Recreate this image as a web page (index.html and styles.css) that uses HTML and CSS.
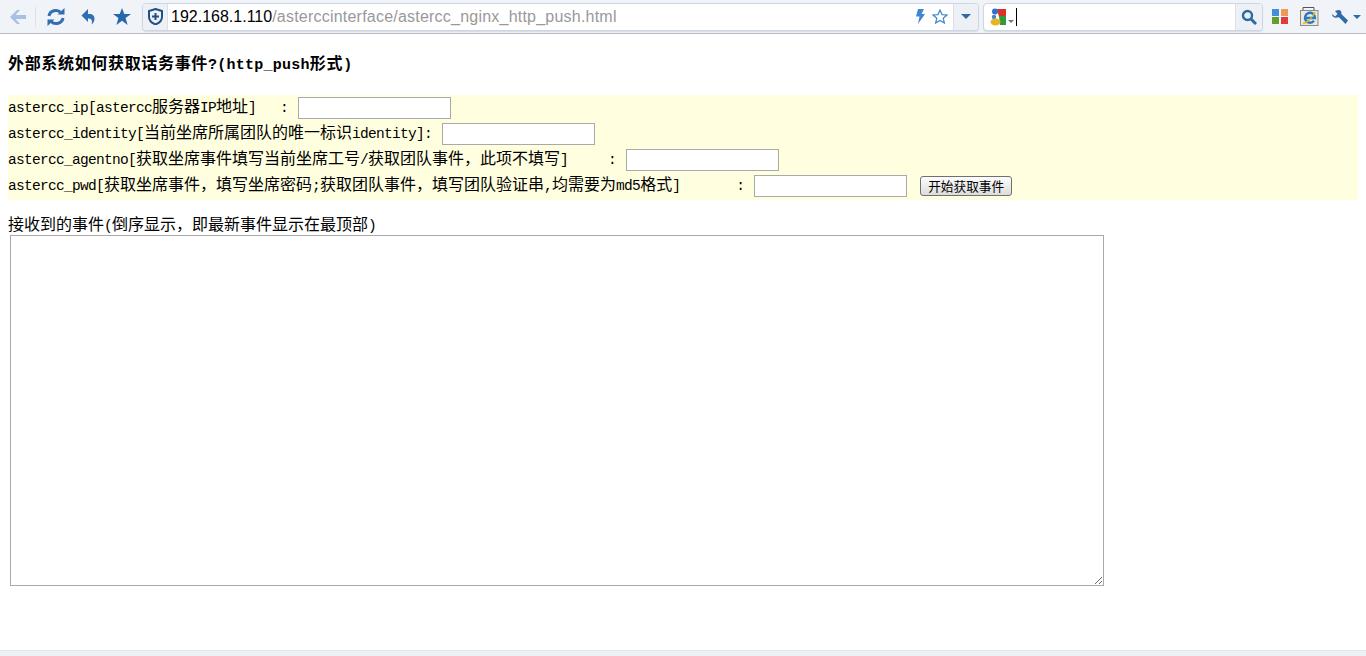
FILE: index.html
```html
<!DOCTYPE html>
<html lang="zh-CN">
<head>
<meta charset="utf-8">
<title>astercc_nginx_http_push</title>
<link rel="stylesheet" href="styles.css">
</head>
<body>
<header class="toolbar">
  <button class="tool tool-back" aria-label="back">
    <svg width="18" height="16" viewBox="0 0 18 16"><path d="M8 1 1 8l7 7h3L6.500 10H17V6H6.500L11 1z" fill="#a9c1e0"/></svg>
  </button>
  <span class="tool-sep"></span>
  <button class="tool tool-reload" aria-label="reload">
    <svg width="20" height="18" viewBox="0 0 20 18"><path d="M3 8a7 6.500 0 0 1 12-3.500M17 10a7 6.500 0 0 1-12 3.500" fill="none" stroke="#2f6fb2" stroke-width="3"/><path d="M11.500 6.500h7V0zM8.500 11.500h-7V18z" fill="#2f6fb2"/></svg>
  </button>
  <button class="tool tool-undo" aria-label="undo">
    <svg width="16" height="16" viewBox="0 0 16 16"><path d="M7 5h2a4.500 4.500 0 0 1 4.500 4.500c0 2.500-1 4.500-3 6 .7-2 .7-4-.3-5-.6-.7-1.500-1-3.200-1v3.500L.5 6.500 7 0z" fill="#2f6fb2"/></svg>
  </button>
  <button class="tool tool-star" aria-label="favorites">
    <svg width="18" height="17" viewBox="0 0 18 17"><path d="m9 0 2.300 6H18l-5.400 4 2 7L9 12.800 3.400 17l2-7L0 6h6.700z" fill="#2768ad"/></svg>
  </button>
  <div class="address">
    <span class="addr-shield">
      <svg width="15" height="17" viewBox="0 0 15 17"><path d="M7.500 1 14 3v6c0 3.500-3 6-6.500 7.500C4 15 1 12.500 1 9V3z" fill="none" stroke="#1f4f86" stroke-width="2"/><path d="M6.500 5h2v2.500H11v2H8.500V12h-2V9.500H4v-2h2.500z" fill="#1f4f86"/></svg>
    </span>
    <span class="addr-url"><span class="url-host">192.168.1.110</span><span class="url-path">/asterccinterface/astercc_nginx_http_push.html</span></span>
    <svg class="addr-bolt" width="10" height="15" viewBox="0 0 10 15"><path d="M3 0h6L6.500 5H10L3 15l1.500-7.500H1z" fill="#3f86d0"/></svg>
    <svg class="addr-fav" width="16" height="15" viewBox="0 0 16 15"><path d="m8 1 2 4.600 5 .4-3.800 3.200L12.400 14 8 11.400 3.600 14l1.200-4.800L1 6l5-.4z" fill="#fff" stroke="#3f86d0" stroke-width="1.200"/></svg>
    <span class="addr-drop"><span class="tri tri-blue"></span></span>
  </div>
  <div class="search">
    <svg class="search-logo" width="17" height="18" viewBox="0 0 17 18"><path d="M7 1h9v8H9z" fill="#d8322a"/><path d="M9 8h7v9h-6z" fill="#2f9b3c"/><circle cx="5" cy="3.500" r="3" fill="#2f6fce"/><circle cx="4" cy="9" r="2.200" fill="#3f86d0"/><ellipse cx="5.500" cy="14" rx="5" ry="3.500" fill="#e5b523"/></svg>
    <span class="tri tri-grey"></span>
    <span class="search-caret"></span>
    <span class="search-btn">
      <svg width="16" height="16" viewBox="0 0 16 16"><circle cx="6.500" cy="6.500" r="4.500" fill="none" stroke="#2a6aa8" stroke-width="2.400"/><path d="m10 10 5 5" stroke="#2a6aa8" stroke-width="3"/></svg>
    </span>
  </div>
  <svg class="ic-apps" width="16" height="15" viewBox="0 0 16 15"><rect width="7" height="7" fill="#3f8fdc"/><rect x="9" width="7" height="7" fill="#ee9a55"/><rect y="8" width="7" height="7" fill="#5f9e2f"/><rect x="9" y="8" width="7" height="7" fill="#e33b3b"/></svg>
  <svg class="ic-ie" width="19" height="19" viewBox="0 0 19 19"><path d="M3 3V.5h11V3" fill="none" stroke="#555"/><rect x=".5" y="3.500" width="17.500" height="15" fill="#efe8d6" stroke="#8a8a8a"/><path d="M5.500 11h9.500a5 5 0 1 0-1 2.800" fill="none" stroke="#2279d2" stroke-width="2.400"/><path d="M3 16.500c3 0 10-6 12-11.500" fill="none" stroke="#e5b523" stroke-width="1.500"/></svg>
  <svg class="ic-wrench" width="18" height="16" viewBox="0 0 18 16"><path d="M1 5 4 7.500 6.500 5 4 2 7 1c2-.3 3.500 1 3.500 3l-.2 1L17 11.500 14.500 15 8 8.300 6 8.600C3 9 1 7.500 1 5z" fill="#2f6aa8"/></svg>
  <span class="tri tri-blue tri-menu"></span>
</header>

<main class="page">
  <h1 class="title">外部系统如何获取话务事件<span class="lat">?(http_push</span>形式<span class="lat">)</span></h1>
  <form class="panel">
    <div class="row"><label class="row-label"><span class="lat">astercc_ip[astercc</span>服务器<span class="lat">IP</span>地址<span class="lat">]   : </span></label><input class="field" type="text"></div>
    <div class="row"><label class="row-label"><span class="lat">astercc_identity[</span>当前坐席所属团队的唯一标识<span class="lat">identity]: </span></label><input class="field" type="text"></div>
    <div class="row"><label class="row-label"><span class="lat">astercc_agentno[</span>获取坐席事件填写当前坐席工号<span class="lat">/</span>获取团队事件，此项不填写<span class="lat">]     : </span></label><input class="field" type="text"></div>
    <div class="row"><label class="row-label"><span class="lat">astercc_pwd[</span>获取坐席事件，填写坐席密码<span class="lat">;</span>获取团队事件，填写团队验证串<span class="lat">,</span>均需要为<span class="lat">md5</span>格式<span class="lat">]       : </span></label><input class="field" type="text"><button class="start" type="button">开始获取事件</button></div>
  </form>
  <p class="events-label">接收到的事件<span class="lat">(</span>倒序显示，即最新事件显示在最顶部<span class="lat">)</span></p>
  <textarea class="events"></textarea>
</main>
<footer class="bottom"></footer>
</body>
</html>
```
FILE: styles.css
```css
html, body {
  margin: 0;
  height: 100%;
  overflow: hidden;
}
body {
  display: flex;
  flex-direction: column;
  background: #fff;
  color: #000;
  font: 16px/20px "Noto Sans CJK SC", "Liberation Sans", sans-serif;
}
.lat {
  font-family: "Liberation Mono", monospace;
  font-size: 14.5px;
  letter-spacing: -.7px;
  line-height: 1;
  white-space: pre;
}

/* browser toolbar */
.toolbar {
  display: flex;
  align-items: center;
  flex: none;
  height: 33px;
  box-sizing: content-box;
  background: #f0f3f8;
  border-bottom: 1px solid #b4bbc3;
}
.tool {
  display: flex;
  align-items: center;
  justify-content: center;
  padding: 0;
  border: 0;
  background: none;
  height: 33px;
}
.tool-back { width: 35px; }
.tool-sep { width: 1px; height: 20px; background: #dde2e9; }
.tool-reload { width: 39px; }
.tool-undo { width: 27px; margin-left: 0; }
.tool-star { width: 39px; }
.tri {
  display: block;
  width: 0;
  height: 0;
  border-style: solid;
  border-color: transparent;
  border-width: 5px 5.500px 0;
}
.tri-blue { border-top-color: #2f6aa8; }
.tri-grey { border-width: 3px 3.500px 0; border-top-color: #777; margin: 10px 0 0 1px; }
.tri-menu { border-width: 4px 4px 0; margin-left: 4px; }
.address, .search {
  display: flex;
  align-items: center;
  height: 26px;
  background: #fff;
  border: 1px solid #cdd6e2;
  border-radius: 4px;
  box-shadow: 0 1px 1px #d8dde4;
}
.address { width: 835px; margin-left: 1px; }
.addr-shield {
  display: flex;
  align-items: center;
  justify-content: center;
  flex: none;
  width: 24px;
  height: 26px;
  background: #edf0f5;
  border-right: 1px solid #dbe1e9;
  border-radius: 4px 0 0 4px;
}
.addr-url {
  flex: 1;
  margin-left: 3px;
  font: 16px/26px "Liberation Sans", sans-serif;
  white-space: nowrap;
}
.url-host { color: #000; }
.url-path { color: #999; letter-spacing: .22px; }
.addr-bolt { flex: none; }
.addr-fav { flex: none; margin: 0 5px 0 7px; }
.addr-drop {
  display: flex;
  align-items: center;
  justify-content: center;
  flex: none;
  width: 24px;
  height: 26px;
  background: #edf0f5;
  border-left: 1px solid #dbe1e9;
  border-radius: 0 4px 4px 0;
}
.search { width: 278px; margin-left: 4px; }
.search-logo { flex: none; margin-left: 6px; }
.search-caret {
  flex: none;
  width: 1px;
  height: 18px;
  margin-left: 2px;
  background: #000;
}
.search-btn {
  display: flex;
  align-items: center;
  justify-content: center;
  flex: none;
  width: 26px;
  height: 26px;
  margin-left: auto;
  background: #edf0f5;
  border-left: 1px solid #dbe1e9;
  border-radius: 0 4px 4px 0;
}
.ic-apps { flex: none; margin-left: 9px; }
.ic-ie { flex: none; margin-left: 12px; }
.ic-wrench { flex: none; margin-left: 12px; }

/* page */
.page {
  flex: 1;
  padding: 0 8px;
}
.title {
  height: 20px;
  margin: 18px 0 23px;
  font-size: 16px;
  line-height: 20px;
  font-weight: 700;
  letter-spacing: .67px;
}
.title .lat {
  font-size: 15px;
  letter-spacing: .25px;
}
.panel {
  height: 105px;
  background: #ffffdf;
}
.row {
  display: flex;
  align-items: center;
  height: 26px;
  white-space: pre;
}
.row-label {
  height: 20px;
  padding-bottom: 6px;
}
.field {
  box-sizing: border-box;
  width: 153px;
  height: 22px;
  margin: 0 0 0 2px;
  padding: 1px 2px;
  background: #fff;
  border: 1px solid #a9a9a9;
  outline: 0;
}
.start {
  box-sizing: border-box;
  width: 92px;
  height: 20px;
  margin-left: 13px;
  padding: 0;
  font: 12.670px/18px "Noto Sans CJK SC", sans-serif;
  color: #000;
  background: linear-gradient(#fdfdfd, #dcdcdc);
  border: 1px solid #707070;
  border-radius: 3px;
}
.events-label {
  margin: 14px 0 0;
  height: 21px;
  line-height: 18px;
  white-space: nowrap;
}
.events {
  display: block;
  box-sizing: border-box;
  width: 1094px;
  height: 351px;
  margin: 0 0 0 2px;
  background: #fff;
  border: 1px solid #a9a9a9;
  outline: 0;
}
.bottom {
  flex: none;
  height: 6px;
  background: #ecf1f7;
  border-top: 1px solid #e2e8ee;
  box-sizing: border-box;
}
```
